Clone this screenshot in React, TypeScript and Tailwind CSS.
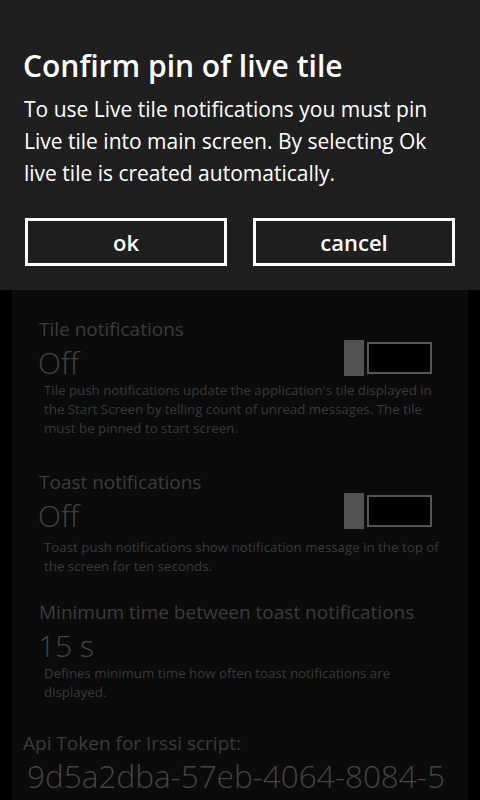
const font = { fontFamily: '"Open Sans", "Noto Sans", sans-serif' };

function Toggle() {
  return (
    <div className="flex items-center w-[88px] h-[36px]">
      <div className="w-[20px] h-[36px] bg-[#505350]" />
      <div className="flex-1 h-[32px] ml-[3px] border-2 border-[#555555] bg-black" />
    </div>
  );
}

function SettingRow({
  title,
  value,
  desc,
  toggle,
  descGap = 0,
}: {
  title: string;
  value: string;
  desc: string;
  toggle?: boolean;
  descGap?: number;
}) {
  return (
    <div className="pl-[27px] pr-[24px]">
      <div className="text-[19px] leading-[26px] text-[#3c3c3c]">{title}</div>
      <div className="flex items-start justify-between mt-[3px]">
        <div className="text-[30px] leading-[36px] font-light text-[#444444] -ml-[1px]">{value}</div>
        {toggle && (
          <div className="-mt-[5px] mr-[12px]">
            <Toggle />
          </div>
        )}
      </div>
      <div
        className={`pl-[5px] pr-0 text-[13.3px] leading-[19px] text-[#3a3a3a] ${descGap ? 'mt-[4px]' : ''}`}
      >
        {desc}
      </div>
    </div>
  );
}

export default function App() {
  return (
    <div className="relative w-[480px] h-[800px] overflow-hidden bg-black" style={font}>
      <div className="mx-[12px] h-full bg-[#0b0b0b] pt-[316px]">
        <SettingRow
          title="Tile notifications"
          value="Off"
          toggle
          desc="Tile push notifications update the application's tile displayed in the Start Screen by telling count of unread messages. The tile must be pinned to start screen."
        />
        <div className="h-[31px]" />
        <SettingRow
          title="Toast notifications"
          value="Off"
          toggle
          descGap={4}
          desc="Toast push notifications show notification message in the top of the screen for ten seconds."
        />
        <div className="h-[23px]" />
        <SettingRow
          title="Minimum time between toast notifications"
          value="15 s"
          desc="Defines minimum time how often toast notifications are displayed."
        />
        <div className="pl-[11px] pt-[28px]">
          <div className="text-[19px] leading-[26px] text-[#3c3c3c]">Api Token for Irssi script:</div>
          <div className="mt-[1px] pl-[4px] text-[31.5px] leading-[38px] font-light text-[#444444] whitespace-nowrap">
            9d5a2dba-57eb-4064-8084-5
          </div>
        </div>
      </div>

      <div className="absolute inset-x-0 top-0 h-[290px] bg-[#1f1f1f] px-[24px] pt-[46px]">
        <div className="text-[30px] leading-[40px] font-semibold text-white -ml-[1px]">Confirm pin of live tile</div>
        <div className="mt-[7px] text-[21px] leading-[32px] text-white">
          To use Live tile notifications you must pin Live tile into main screen. By selecting Ok live tile is created automatically.
        </div>
        <div className="mt-[29px] flex gap-[26px] pl-[1px]">
          <button className="w-[202px] h-[48px] border-[3px] border-white text-[22px] font-semibold text-white">ok</button>
          <button className="w-[202px] h-[48px] border-[3px] border-white text-[22px] font-semibold text-white">cancel</button>
        </div>
      </div>
    </div>
  );
}
